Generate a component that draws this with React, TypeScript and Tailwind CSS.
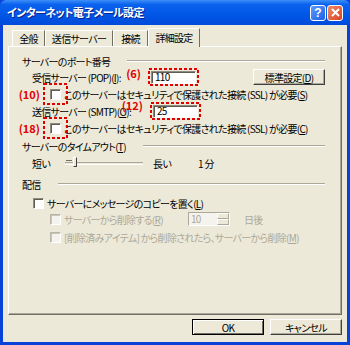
import React from "react";

function Check({ dim = false }: { dim?: boolean }) {
  return (
    <span
      className={
        dim
          ? "inline-block w-[11px] h-[11px] shrink-0 border border-[#B9B6A8] border-b-white border-r-white bg-[#F4F3EE] shadow-[inset_1px_1px_0_#C9C6B8]"
          : "inline-block w-[11px] h-[11px] shrink-0 border border-[#8E8B7E] border-b-white border-r-white bg-white shadow-[inset_1px_1px_0_#5F5D53]"
      }
    />
  );
}

function DashBox({ w, h, className }: { w: number; h: number; className: string }) {
  return (
    <svg width={w} height={h} className={className}>
      <rect x="1" y="1" width={w - 2} height={h - 2} fill="none" stroke="#E00000" strokeWidth="2" strokeDasharray="3 2" />
    </svg>
  );
}

function Red({ children, className }: { children: React.ReactNode; className: string }) {
  return (
    <span className={"absolute text-[11px] font-bold leading-none tracking-normal text-[#E00000] whitespace-nowrap " + className}>
      {children}
    </span>
  );
}

function Field({ value }: { value: string }) {
  return (
    <span className="flex items-center w-[45px] h-[13px] pl-[3px] bg-white border border-[#8E8B7E] border-b-white border-r-white shadow-[inset_1px_1px_0_#5F5D53] leading-none">
      {value}
    </span>
  );
}

function Header({ title }: { title: React.ReactNode }) {
  return (
    <div className="flex items-center h-[14px]">
      <span className="whitespace-nowrap">{title}</span>
      <span className="flex-1 ml-[17px] h-[2px] border-t border-[#ACA899] border-b border-b-white" />
    </div>
  );
}

function Btn({ children, def = false }: { children: React.ReactNode; def?: boolean }) {
  return (
    <div
      className={
        def
          ? "flex items-center justify-center w-[72px] h-[16px] border border-black bg-[#ECE9D8] shadow-[inset_1px_1px_0_#fff,inset_-1px_-1px_0_#716F64]"
          : "flex items-center justify-center w-[72px] h-[16px] border border-white border-b-[#404040] border-r-[#404040] bg-[#ECE9D8] shadow-[inset_-1px_-1px_0_#ACA899]"
      }
    >
      {children}
    </div>
  );
}

export default function App() {
  return (
    <div className="w-[350px] h-[345px] flex flex-col bg-[#0842D8] font-['Noto_Sans_CJK_JP',sans-serif] [font-feature-settings:'palt'] text-[10px] tracking-[-0.7px] text-black">
      {/* title bar */}
      <div className="flex items-center h-[25px] pl-[7px] pr-[7px] bg-[linear-gradient(to_bottom,#3D8FF8_0%,#0B62EE_18%,#0056E6_60%,#004BDB_100%)] rounded-t-[6px]">
        <span className="text-white text-[11px] font-bold tracking-[-0.6px] [text-shadow:1px_1px_0_#0A1E8C]">インターネット電子メール設定</span>
        <div className="ml-auto flex gap-[1px]">
          <div className="flex items-center justify-center w-[16px] h-[16px] rounded-[3px] border border-white bg-[linear-gradient(135deg,#5C9BFF,#1E5FE6)] text-white font-bold text-[12px] leading-none tracking-normal font-['Liberation_Sans',sans-serif]">
            ?
          </div>
          <div className="flex items-center justify-center w-[16px] h-[16px] rounded-[3px] border border-white bg-[linear-gradient(135deg,#F08A6A,#D8421E)]">
            <svg width="9" height="9" viewBox="0 0 9 9">
              <path d="M1 1 L8 8 M8 1 L1 8" stroke="white" strokeWidth="2" />
            </svg>
          </div>
        </div>
      </div>

      {/* body */}
      <div className="flex-1 mx-[3px] mb-[3px] bg-[#ECE9D8] px-[5px] pt-[3px] flex flex-col">
        {/* tabs */}
        <div className="flex items-end h-[18px] ml-[4px]">
          <div className="flex items-center justify-center w-[33px] h-[16px] border-t border-l border-white border-r border-r-[#716F64]">全般</div>
          <div className="flex items-center justify-center w-[68px] h-[16px] border-t border-l border-white border-r border-r-[#716F64]">送信サーバー</div>
          <div className="flex items-center justify-center w-[35px] h-[16px] border-t border-l border-white border-r border-r-[#716F64]">接続</div>
          <div className="relative z-10 -mb-px flex items-center justify-center w-[52px] h-[19px] bg-[#ECE9D8] border-t border-l border-white border-r border-r-[#716F64] pb-[2px]">詳細設定</div>
        </div>

        {/* panel */}
        <div className="h-[269px] border border-white border-b-[#716F64] border-r-[#716F64] shadow-[inset_-1px_-1px_0_#ACA899] pt-[7px] pl-[13px] pr-[16px] flex flex-col">
          <Header title="サーバーのポート番号" />

          <div className="flex items-center h-[18px] pl-[10px]">
            <span className="w-[121px] whitespace-nowrap">
              受信サーバー (POP)(<u>I</u>):
            </span>
            <span className="relative flex">
              <Field value="110" />
              <DashBox w={51} h={18} className="absolute -left-[3px] -top-[3px]" />
              <Red className="right-[55px] -top-[3px]">(6)</Red>
            </span>
            <div className="ml-[57px]">
              <Btn>
                標準設定(<u>D</u>)
              </Btn>
            </div>
          </div>

          <div className="flex items-center h-[16px] pl-[28px]">
            <span className="relative flex">
              <Check />
              <DashBox w={25} h={22} className="absolute -left-[7px] -top-[6px]" />
              <Red className="right-[21px] top-[0px]">(10)</Red>
            </span>
            <span className="ml-[3px] whitespace-nowrap">
              このサーバーはセキュリティで保護された接続 (SSL) が必要(<u>S</u>)
            </span>
          </div>

          <div className="flex items-center h-[18px] pl-[10px]">
            <span className="w-[121px] whitespace-nowrap">
              送信サーバー (SMTP)(<u>O</u>):
            </span>
            <span className="relative flex">
              <Field value="25" />
              <DashBox w={51} h={18} className="absolute -left-[3px] -top-[3px]" />
              <Red className="right-[55px] -top-[5px]">(12)</Red>
            </span>
          </div>

          <div className="flex items-center h-[16px] pl-[28px]">
            <span className="relative flex">
              <Check />
              <DashBox w={25} h={22} className="absolute -left-[7px] -top-[6px]" />
              <Red className="right-[21px] top-[0px]">(18)</Red>
            </span>
            <span className="ml-[3px] whitespace-nowrap">
              このサーバーはセキュリティで保護された接続 (SSL) が必要(<u>C</u>)
            </span>
          </div>

          <div className="mt-[3px]">
            <Header
              title={
                <>
                  サーバーのタイムアウト(<u>T</u>)
                </>
              }
            />
          </div>

          <div className="mt-[2px] flex items-center h-[16px] pl-[10px]">
            <span className="w-[33px]">短い</span>
            <span className="relative w-[78px] h-[3px] border-t border-[#ACA899] border-b border-b-white">
              <span className="absolute left-[1px] -top-[3px] w-[6px] h-[1px] bg-[#716F64]" />
              <span className="absolute left-[8px] -top-[6px] w-[4px] h-[10px] bg-[#ECE9D8] border border-white border-b-[#404040] border-r-[#404040]" />
            </span>
            <span className="ml-[10px] w-[45px]">長い</span>
            <span>1 分</span>
          </div>

          <div className="mt-[6px]">
            <Header title="配信" />
          </div>

          <div className="mt-[4px] flex items-center h-[16px] pl-[11px]">
            <Check />
            <span className="ml-[3px] whitespace-nowrap">
              サーバーにメッセージのコピーを置く(<u>L</u>)
            </span>
          </div>

          <div className="flex items-center h-[16px] pl-[28px] text-[#ACA899]">
            <Check dim />
            <span className="ml-[3px] w-[124px] whitespace-nowrap">
              サーバーから削除する(<u>R</u>)
            </span>
            <span className="flex w-[42px] h-[14px] border border-[#ACA899] border-b-white border-r-white bg-[#F4F3EE]">
              <span className="flex-1 flex items-center pl-[2px] leading-none">10</span>
              <span className="w-[12px] flex flex-col">
                <span className="flex-1 border border-white border-b-[#ACA899] border-r-[#ACA899] bg-[#ECE9D8]" />
                <span className="flex-1 border border-white border-b-[#ACA899] border-r-[#ACA899] bg-[#ECE9D8]" />
              </span>
            </span>
            <span className="ml-[14px]">日後</span>
          </div>

          <div className="mt-[2px] flex items-center h-[16px] pl-[28px] text-[#ACA899]">
            <Check dim />
            <span className="ml-[3px] whitespace-nowrap">
              [削除済みアイテム] から削除されたら、サーバーから削除(<u>M</u>)
            </span>
          </div>
        </div>

        {/* footer */}
        <div className="mt-[4px] flex justify-end gap-[6px]">
          <Btn def>OK</Btn>
          <Btn>キャンセル</Btn>
        </div>
      </div>
    </div>
  );
}
